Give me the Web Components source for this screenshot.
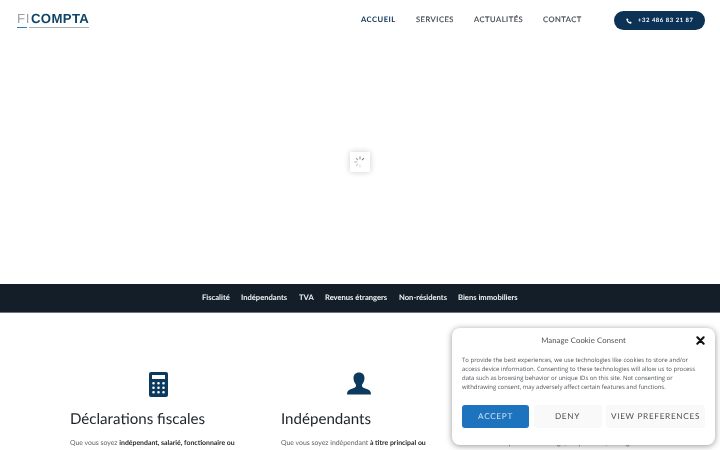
<!DOCTYPE html>
<html lang="fr">
<head>
<meta charset="utf-8">
<title>FI Compta</title>
<style>
html, body { margin: 0; padding: 0; overflow: hidden; height: 450px; background: #fff; }
body { font-family: "Lato", sans-serif; text-rendering: geometricPrecision; }
</style>
</head>
<body>
<site-header></site-header>
<hero-loader></hero-loader>
<topic-bar></topic-bar>
<section-cards>
  <info-card title="Déclarations fiscales" icon="calc" iconw="176">Que vous soyez <b>indépendant, salarié, fonctionnaire ou</b></info-card>
  <info-card title="Indépendants" icon="user" iconw="157">Que vous soyez indépendant <b>à titre principal ou</b></info-card>
  <info-card icon="calc" iconw="176">Nous prenons en charge, au quotidien, votre gestion</info-card>
</section-cards>
<cookie-box></cookie-box>

<script>
class SiteHeader extends HTMLElement {
    constructor(){
        super();
        this.shadowDOM = this.attachShadow({mode: "open"});
        this.shadowDOM.innerHTML = `
        <style>
            :host{ display: flex; align-items: center; justify-content: space-between; height: 40px; padding: 0 15px 0 17px; background: #fff; }
            .logo{ display: flex; flex-direction: column; width: 72px; margin-top: -1px; }
            .word{ display: flex; align-items: baseline; font: 700 13.200px/15px "Liberation Sans", sans-serif; letter-spacing: .35px; color: #0f4468; height: 15px; white-space: nowrap; will-change: transform; }
            .word span{ font-weight: 400; color: #9aa0a4; margin-right: 1px; letter-spacing: .6px; }
            .lines{ display: flex; gap: 2px; margin-top: 1px; }
            .lines i{ display: block; height: 1px; background: #a9aeb1; flex: 1; }
            .lines i:first-child{ flex: 0 0 10px; background: #2b7fb8; height: 1.500px; }
            nav{ display: flex; align-items: center; }
            a{ font: 400 7.600px/1 "Lato", sans-serif; letter-spacing: .5px; color: #3a4249; -webkit-text-stroke: .15px #3a4249; margin-right: 20px; white-space: nowrap; will-change: transform; }
            a.on{ color: #0c3050; font-weight: 700; -webkit-text-stroke: 0; }
            .phone{ display: flex; align-items: center; justify-content: center; gap: 6px; width: 91px; height: 19px; margin-left: 12px; border-radius: 10px; background: #0c3256; color: #fff; font: 700 5.900px/1 "Lato", sans-serif; letter-spacing: .55px; }
            .phone span{ margin-top: 2px; will-change: transform; }
            svg{ width: 6px; height: 6px; fill: #fff; margin-top: 1px; }
        </style>
        <div class="logo">
            <div class="word"><span>FI</span>COMPTA</div>
            <div class="lines"><i></i><i></i></div>
        </div>
        <nav>
            <a class="on">ACCUEIL</a>
            <a>SERVICES</a>
            <a>ACTUALITÉS</a>
            <a>CONTACT</a>
            <div class="phone">
                <svg viewBox="0 0 24 24"><path d="M6.600 1.500 10 7.200 7.600 9.600c1.200 2.800 3.900 5.600 6.800 6.800l2.400-2.400 5.700 3.400-1.600 4.400c-.4.800-1.300 1.100-2.200 1C9.500 21.700 2.300 14.500 1.100 5.300c-.1-.9.2-1.800 1-2.200z"/></svg>
                <span>+32 486 83 21 87</span>
            </div>
        </nav>
        `;
    }
}
customElements.define("site-header", SiteHeader);

class HeroLoader extends HTMLElement {
    constructor(){
        super();
        this.shadowDOM = this.attachShadow({mode: "open"});
        let spokes = "";
        // gray spokes fade out round the circle, gap on the lower right
        for (let i = 0; i < 6; i++) {
            spokes += `<line x1="10" y1="2" x2="10" y2="6" transform="rotate(${i * -45 + 45} 10 10)" stroke="#666" stroke-width="1.500" opacity="${(0.9 - i * 0.13).toFixed(2)}"/>`;
        }
        this.shadowDOM.innerHTML = `
        <style>
            :host{ display: flex; align-items: center; justify-content: center; height: 244px; background: #fff; }
            .box{ display: flex; align-items: center; justify-content: center; width: 20px; height: 20px; background: #fff; box-shadow: 0 0 6px rgba(0,0,0,.2); }
            svg{ width: 14px; height: 14px; }
        </style>
        <div class="box"><svg viewBox="0 0 20 20">${spokes}</svg></div>
        `;
    }
}
customElements.define("hero-loader", HeroLoader);

class TopicBar extends HTMLElement {
    constructor(){
        super();
        this.shadowDOM = this.attachShadow({mode: "open"});
        const topics = ["Fiscalité", "Indépendants", "TVA", "Revenus étrangers", "Non-résidents", "Biens immobiliers"];
        this.shadowDOM.innerHTML = `
        <style>
            :host{ display: flex; align-items: center; justify-content: center; gap: 11.500px; height: 29px; padding-bottom: 1px; box-sizing: border-box; background: #141e29; border-bottom: 1px solid #6d7479; }
            span{ font: 700 7.600px/1 "Lato", sans-serif; color: #f1f3f4; white-space: nowrap; will-change: transform; }
        </style>
        ${topics.map(t => `<span>${t}</span>`).join("")}
        `;
    }
}
customElements.define("topic-bar", TopicBar);

class SectionCards extends HTMLElement {
    constructor(){
        super();
        this.shadowDOM = this.attachShadow({mode: "open"});
        this.shadowDOM.innerHTML = `
        <style>
            :host{ display: grid; grid-template-columns: repeat(3, 175px); column-gap: 35.500px; padding: 59px 0 0 70px; background: #fff; }
        </style>
        <slot></slot>
        `;
    }
}
customElements.define("section-cards", SectionCards);

const ICONS = {
    calc: `<svg viewBox="0 0 19 25" width="19" height="25"><path fill="#0c3a5e" fill-rule="evenodd" d="M2 0h15a2 2 0 0 1 2 2v21a2 2 0 0 1-2 2H2a2 2 0 0 1-2-2V2a2 2 0 0 1 2-2zM3 3v4h13V3zM4.500 10a1.300 1.300 0 1 0 0 2.600 1.300 1.300 0 0 0 0-2.600zm5 0a1.300 1.300 0 1 0 0 2.600 1.300 1.300 0 0 0 0-2.600zm5 0a1.300 1.300 0 1 0 0 2.600 1.300 1.300 0 0 0 0-2.600zm-10 4.500a1.300 1.300 0 1 0 0 2.600 1.300 1.300 0 0 0 0-2.600zm5 0a1.300 1.300 0 1 0 0 2.600 1.300 1.300 0 0 0 0-2.600zm5 0a1.300 1.300 0 1 0 0 2.600 1.300 1.300 0 0 0 0-2.600zm-10 4.500a1.300 1.300 0 1 0 0 2.600 1.300 1.300 0 0 0 0-2.600zm5 0a1.300 1.300 0 1 0 0 2.600 1.300 1.300 0 0 0 0-2.600zm5 0a1.300 1.300 0 1 0 0 2.600 1.300 1.300 0 0 0 0-2.600z"/></svg>`,
    user: `<svg viewBox="0 0 24 24" width="24" height="24"><path fill="#0c3a5e" d="M12 .5c3.500 0 5.500 2.400 5.500 5.600 0 2.300-.8 4.500-2.100 5.900-.6.700-.6 2.200.1 2.900 1 1 3.200 1.600 5 2.300 2.200.9 3.500 2.100 3.500 5.300H0c0-3.200 1.300-4.400 3.500-5.300 1.800-.7 4-1.300 5-2.300.7-.7.7-2.200.1-2.900-1.300-1.400-2.100-3.600-2.100-5.900C6.500 2.900 8.500.5 12 .5z"/></svg>`
};

class InfoCard extends HTMLElement {
    constructor(){
        super();
        this.shadowDOM = this.attachShadow({mode: "open"});
    }
    connectedCallback(){
        this.shadowDOM.innerHTML = `
        <style>
            :host{ display: block; }
            .icon{ display: flex; justify-content: center; height: 25px; }
            h3{ margin: 12px 0 0; min-height: 20px; font: 400 15.100px/20px "Lato", sans-serif; color: #1c2228; white-space: nowrap; will-change: transform; }
            p{ margin: 8px 0 0; font: 400 6.900px/12px "Lato", sans-serif; color: #5f6367; white-space: nowrap; will-change: transform; }
            ::slotted(b){ font-weight: 700; color: #23272b; }
        </style>
        <div class="icon" style="width:${this.getAttribute("iconw")}px">${ICONS[this.getAttribute("icon")]}</div>
        <h3>${this.getAttribute("title") || ""}</h3>
        <p><slot></slot></p>
        `;
    }
}
customElements.define("info-card", InfoCard);

class CookieBox extends HTMLElement {
    constructor(){
        super();
        this.shadowDOM = this.attachShadow({mode: "open"});
        const lines = [
            ["To provide the best experiences, we use technologies like cookies to store and/or", 226],
            ["access device information. Consenting to these technologies will allow us to process", 233],
            ["data such as browsing behavior or unique IDs on this site. Not consenting or", 208],
            ["withdrawing consent, may adversely affect certain features and functions.", 202]
        ];
        this.shadowDOM.innerHTML = `
        <style>
            :host{ position: fixed; left: 452px; top: 328px; width: 263px; height: 117px; box-sizing: border-box; padding: 6px 10px 0; display: flex; flex-direction: column; background: #fff; border-radius: 8px; box-shadow: 0 1px 6px rgba(0,0,0,.42); color: #4a4e52; z-index: 2; }
            .head{ position: relative; text-align: center; font: 400 7.700px/12px "Lato", sans-serif; letter-spacing: .1px; height: 12px; margin-bottom: 10px; }
            .head svg{ position: absolute; right: 0; top: 2px; width: 9px; height: 9px; }
            .txt{ font: 400 5.950px/9px "Open Sans", sans-serif; color: #505458; white-space: nowrap; will-change: transform; }
            .txt span{ display: block; text-align: justify; text-align-last: justify; }
            .btns{ display: flex; gap: 4.500px; margin-top: 13px; }
            .btn{ display: flex; align-items: center; justify-content: center; height: 23px; border-radius: 3px; background: #f9f9f9; font: 400 8.200px/1 "Lato", sans-serif; letter-spacing: .7px; color: #4d5155; white-space: nowrap; }
            .accept{ width: 67px; background: #1e73be; color: #cfe2f2; }
            .deny{ width: 68px; }
            .prefs{ width: 99px; }
        </style>
        <div class="head">Manage Cookie Consent
            <svg viewBox="0 0 10 10"><path d="M1.500 1.500l7 7M8.500 1.500l-7 7" stroke="#111" stroke-width="2.300" stroke-linecap="round"/></svg>
        </div>
        <div class="txt">${lines.map(l => `<span style="width:${l[1]}px">${l[0]}</span>`).join("")}</div>
        <div class="btns">
            <div class="btn accept">ACCEPT</div>
            <div class="btn deny">DENY</div>
            <div class="btn prefs">VIEW PREFERENCES</div>
        </div>
        `;
    }
}
customElements.define("cookie-box", CookieBox);
</script>
</body>
</html>
